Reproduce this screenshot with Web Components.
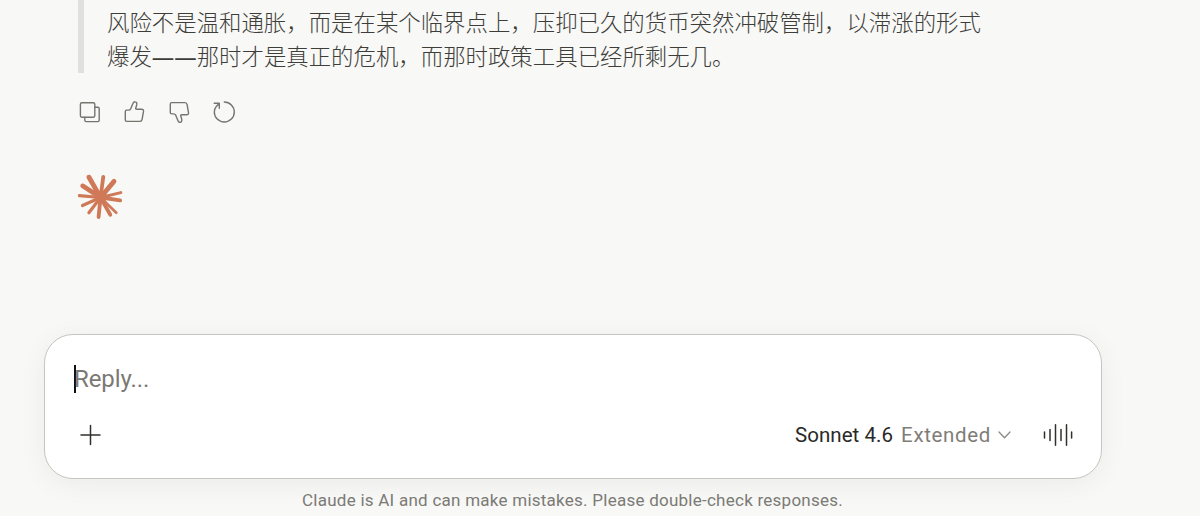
<!DOCTYPE html>
<html lang="zh-CN">
<head>
<meta charset="utf-8">
<title>Claude</title>
<style>
    body {
        margin: 0;
        height: 516px;
        overflow: hidden;
        background: #f8f8f6;
        font-family: Roboto, "Noto Sans CJK SC", sans-serif;
    }

    .dash {
        font-family: "Noto Sans", sans-serif;
        font-weight: 400;
        line-height: 1;
    }
</style>
</head>
<body>
<chat-view>
    <quote-block>风险不是温和通胀，而是在某个临界点上，压抑已久的货币突然冲破管制，以滞涨的形式<br>爆发<span class="dash">——</span>那时才是真正的危机，而那时政策工具已经所剩无几。</quote-block>
    <message-actions></message-actions>
    <claude-spark></claude-spark>
    <chat-composer slot="footer" placeholder="Reply...">
        <model-picker slot="tools" model="Sonnet 4.6" mode="Extended"></model-picker>
    </chat-composer>
    <span slot="note">Claude is AI and can make mistakes. Please double-check responses.</span>
</chat-view>

<script>
class ChatViewComponent extends HTMLElement {
    #template = `
        <style>
            :host {
                display: flex;
                flex-direction: column;
                height: 516px;
            }

            .messages {
                display: flex;
                flex-direction: column;
                align-items: flex-start;
                height: 334px;
                padding-left: 78px;
            }

            .footer {
                padding-left: 44px;
                width: 1058px;
            }

            .note {
                margin-top: 9px;
                padding-left: 302px;
                color: #7b7a75;
                font: 17px/24px Roboto, sans-serif;
                letter-spacing: .25px;
                white-space: nowrap;
            }
        </style>

        <div class="messages"><slot></slot></div>
        <div class="footer"><slot name="footer"></slot></div>
        <div class="note"><slot name="note"></slot></div>
    `;

    constructor() {
        super();
        this.attachShadow({ mode: 'open' }).innerHTML = this.#template;
    }
}


class QuoteBlockComponent extends HTMLElement {
    #template = `
        <style>
            :host {
                display: block;
                box-sizing: border-box;
                height: 73px;
                padding: 4px 0 0 23px;
                border-left: 6px solid #e0e0de;
                border-bottom-left-radius: 1px;
                color: #3d3d3a;
                font: 300 22.42px/34px "Noto Sans CJK SC", sans-serif;
                white-space: nowrap;
            }
        </style>

        <slot></slot>
    `;

    constructor() {
        super();
        this.attachShadow({ mode: 'open' }).innerHTML = this.#template;
    }
}


class MessageActionsComponent extends HTMLElement {
    #template = `
        <style>
            :host {
                display: flex;
                gap: 21px;
                margin-top: 27px;
            }

            svg {
                display: block;
                width: 24px;
                height: 24px;
                fill: none;
                stroke: #75746f;
                stroke-width: 1.4;
                stroke-linejoin: round;
                stroke-linecap: round;
            }
        </style>

        <svg viewBox="0 0 24 24"><rect x="2.4" y="2.8" width="14.4" height="14.4" rx="1.4"/><path d="M16.8 7.3h3a1.4 1.4 0 0 1 1.4 1.4v11.5a1.4 1.4 0 0 1-1.4 1.4H8.2a1.4 1.4 0 0 1-1.4-1.4v-3"/></svg>
        <svg viewBox="0 0 24 24"><path d="M2.3 11.4q0-1.3 1.3-1.3h2.2q1.2 0 1.9-1.3l2.1-5q.7-2.2 2.1-2 2.4.2 1.8 3.2l-1 3.2q-.2 1 1 1h4.8q2.3 0 2 2.2l-1.4 8q-.3 2-2.2 2H3.6q-1.3 0-1.3-1.3z"/></svg>
        <svg viewBox="0 0 24 24"><path d="M2.3 12.6q0 1.3 1.3 1.3h2.2q1.2 0 1.9 1.3l2.1 5q.7 2.2 2.1 2 2.4-.2 1.8-3.2l-1-3.2q-.2-1 1-1h4.8q2.3 0 2-2.2l-1.4-8q-.3-2-2.2-2H3.6q-1.3 0-1.3 1.3z"/></svg>
        <svg viewBox="0 0 24 24"><path d="M11.3 2a10 10 0 1 1-10 10q0-3 2-5.6L6.3 3.2M1.2 3.2h5.1v5.1"/></svg>
    `;

    constructor() {
        super();
        this.attachShadow({ mode: 'open' }).innerHTML = this.#template;
    }
}


class ClaudeSparkComponent extends HTMLElement {
    #template = `
        <style>
            :host {
                display: block;
                margin-top: 50px;
            }

            svg {
                display: block;
                width: 46px;
                height: 46px;
                fill: #cf7958;
                stroke: #cf7958;
                stroke-linejoin: round;
            }
        </style>

        <svg viewBox="0 0 46 46"></svg>
    `;

    // tip x, tip y, width at the tip
    #rays = [
        [11, 3.2, 4.8], [25.3, 2.8, 3.8], [36, 7.4, 4.8], [42.8, 18.6, 3],
        [42.2, 26.4, 3.8], [38.3, 38.8, 2.6], [32.3, 40.8, 3.8], [20.6, 43, 3.8],
        [10.9, 38.7, 3.2], [4.5, 31.5, 3.2], [1.2, 21.6, 3.2], [4.6, 11.8, 4.6]
    ];

    constructor() {
        super();
        const root = this.attachShadow({ mode: 'open' });
        root.innerHTML = this.#template;
        root.querySelector('svg').innerHTML = this.#rays.map(([x, y, width]) =>
            `<path fill="none" stroke-linecap="round" stroke-width="${width}" d="M22.5 23.5L${x} ${y}"/>`
        ).join('') + '<circle cx="22.8" cy="23" r="5.8"/>';
    }
}


class ChatComposerComponent extends HTMLElement {
    #template = `
        <style>
            :host {
                display: flex;
                flex-direction: column;
                justify-content: space-between;
                box-sizing: border-box;
                height: 144.5px;
                padding: 28px 28px 25px 29px;
                border: 1px solid #c5c5c2;
                border-radius: 29px;
                background: #fff;
                box-shadow: 0 5px 28px rgba(0, 0, 0, .055);
            }

            .input {
                display: flex;
                align-items: center;
                height: 32px;
                color: #7b7974;
                font: 24px/32px Roboto, sans-serif;
                letter-spacing: -.1px;
            }

            .caret {
                width: 2px;
                height: 28px;
                margin-right: -2px;
                background: #111;
            }

            .toolbar {
                display: flex;
                align-items: center;
                justify-content: space-between;
                height: 36px;
            }

            svg {
                display: block;
                fill: none;
                stroke: #30302e;
                stroke-width: 1.5;
                stroke-linecap: round;
            }

            .plus {
                margin-left: 6px;
            }

            .right {
                display: flex;
                align-items: center;
                gap: 32px;
            }
        </style>

        <div class="input"><i class="caret"></i><span class="placeholder"></span></div>
        <div class="toolbar">
            <svg class="plus" width="22" height="22" viewBox="0 0 22 22"><path d="M10.5 1.5v19M1 11h19"/></svg>
            <div class="right">
                <slot name="tools"></slot>
                <svg width="30" height="24" viewBox="0 0 30 24"><path d="M1.5 9v6M7 6.5v11M12.5 1.8v20.4M18 6.5v11M23.5 1.8v20.4M28.6 9v6"/></svg>
            </div>
        </div>
    `;

    constructor() {
        super();
        this.attachShadow({ mode: 'open' }).innerHTML = this.#template;
    }

    static get observedAttributes() {
        return ['placeholder'];
    }

    attributeChangedCallback(name, oldValue, newValue) {
        this.shadowRoot.querySelector('.placeholder').textContent = newValue;
    }
}


class ModelPickerComponent extends HTMLElement {
    #template = `
        <style>
            :host {
                display: flex;
                align-items: center;
                font: 20.5px/28px Roboto, sans-serif;
                white-space: nowrap;
            }

            .model {
                margin-right: 8px;
                color: #292927;
                letter-spacing: .05px;
            }

            .mode {
                margin-right: 7px;
                color: #7f7d78;
                letter-spacing: .65px;
            }

            svg {
                fill: none;
                stroke: #8b8a85;
                stroke-width: 1.3;
                stroke-linecap: round;
                stroke-linejoin: round;
            }
        </style>

        <span class="model"></span>
        <span class="mode"></span>
        <svg width="13" height="8" viewBox="0 0 13 8"><path d="M1 1l5.5 5.8L12 1"/></svg>
    `;

    constructor() {
        super();
        this.attachShadow({ mode: 'open' }).innerHTML = this.#template;
    }

    static get observedAttributes() {
        return ['model', 'mode'];
    }

    attributeChangedCallback(name, oldValue, newValue) {
        this.shadowRoot.querySelector(`.${name}`).textContent = newValue;
    }
}

window.customElements.define('chat-view', ChatViewComponent);
window.customElements.define('quote-block', QuoteBlockComponent);
window.customElements.define('message-actions', MessageActionsComponent);
window.customElements.define('claude-spark', ClaudeSparkComponent);
window.customElements.define('chat-composer', ChatComposerComponent);
window.customElements.define('model-picker', ModelPickerComponent);
</script>
</body>
</html>
